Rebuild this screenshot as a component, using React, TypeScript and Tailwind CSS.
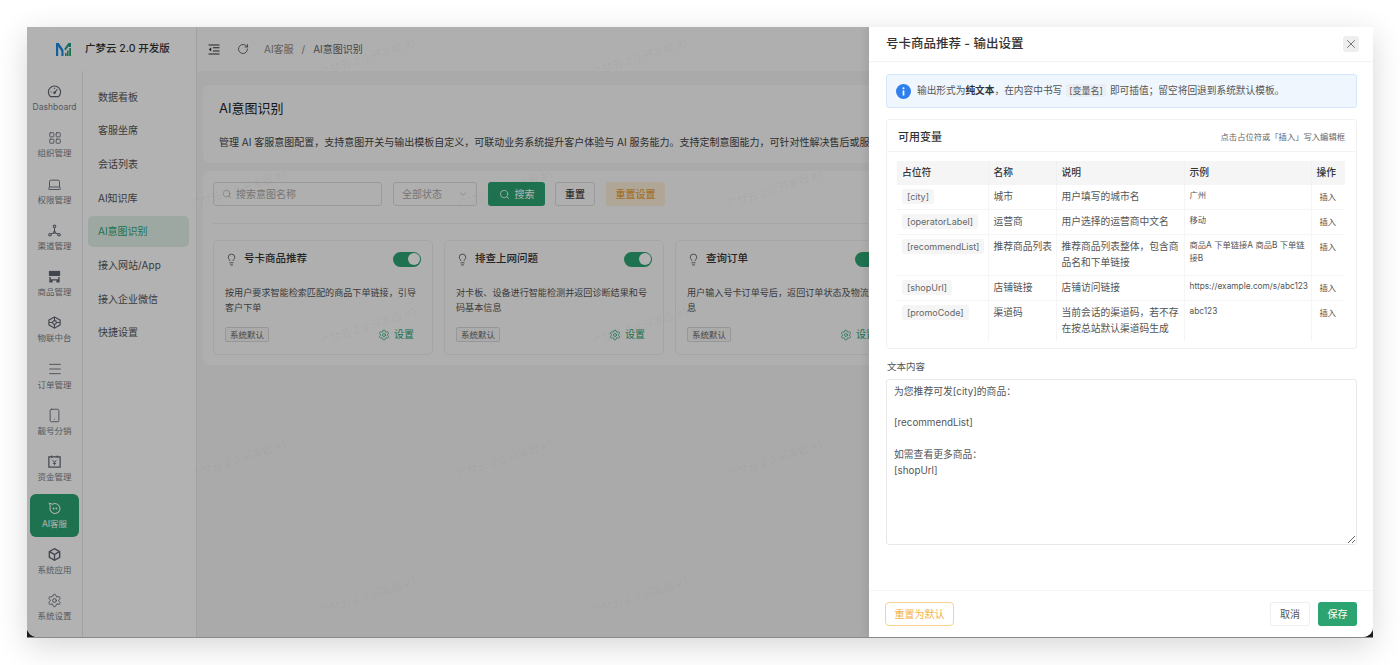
import { ChevronDown, Laptop, LayoutGrid, Lightbulb, Menu, RotateCw, Search, Settings, Smartphone, X } from 'lucide-react'
import type { ReactNode } from 'react'

const FONT = 'font-["Inter","Noto_Sans_CJK_SC",sans-serif]'

function Logo() {
  return (
    <svg width="15" height="15" viewBox="0 0 15 15">
      <path d="M0 1h2.800L7.500 8v6H5.400V9.200L2.200 4.600V14H0z" fill="#1e88e5" />
      <path d="M15 1h-2.600L8.300 6.800 9.400 8.500 12.800 4v1H15z" fill="#1f9d8a" />
      <rect x="9" y="11" width="1.600" height="3" fill="#2ba471" />
      <rect x="11" y="8.500" width="1.600" height="5.500" fill="#2ba471" />
      <rect x="13.200" y="6" width="1.800" height="8" fill="#2ba471" />
    </svg>
  )
}

function CollapseIcon() {
  return (
    <svg width="12" height="11" viewBox="0 0 12 11" fill="none" stroke="currentColor" strokeWidth="1.100">
      <path d="M.5 1h11M5 3.800h6.500M5 7h6.500M.5 10h11" />
      <path d="M3.200 3.200v4.400L.8 5.400z" fill="currentColor" stroke="none" />
    </svg>
  )
}

function GaugeIcon() {
  return (
    <svg width="15" height="15" viewBox="0 0 16 16" fill="none" stroke="currentColor" strokeWidth="1.200">
      <path d="M3.600 13.400h8.800a6.500 6.500 0 1 0-8.800 0z" />
      <path d="M8 9.200l3-3.400M3.800 8.500h1.200M8 4v1.200" />
      <circle cx="8" cy="9.300" r=".8" fill="currentColor" />
    </svg>
  )
}

function NodesIcon() {
  return (
    <svg width="15" height="15" viewBox="0 0 16 16" fill="none" stroke="currentColor" strokeWidth="1.100">
      <circle cx="8" cy="3.500" r="1.400" />
      <circle cx="3.200" cy="12.500" r="1.400" />
      <circle cx="12.800" cy="12.500" r="1.400" />
      <circle cx="8" cy="10" r="1" />
      <path d="M8 5v4M7.100 10.500l-2.700 1.300M8.900 10.500l2.700 1.300" />
    </svg>
  )
}

function ShopIcon() {
  return (
    <svg width="15" height="15" viewBox="0 0 16 16" fill="currentColor">
      <path d="M2 2h12v5.500H2z" />
      <path d="M2.500 8.500H4V11h8V8.500h1.500v6H10V12.300H6v2.200H2.500z" />
    </svg>
  )
}

function IotIcon() {
  return (
    <svg width="15" height="15" viewBox="0 0 16 16" fill="none" stroke="currentColor" strokeWidth="1.200">
      <path d="M8 2l6 3.500v5L8 14l-6-3.500v-5z" />
      <circle cx="8" cy="8" r="2" />
      <path d="M2 8h4M10 8h4M8 2v4M8 10v4" />
    </svg>
  )
}

function WalletIcon() {
  return (
    <svg width="15" height="15" viewBox="0 0 16 16" fill="none" stroke="currentColor" strokeWidth="1.300">
      <rect x="2" y="3" width="12" height="11" />
      <path d="M5 1.500v3M11 1.500v3M6 6.500l2 2.500 2-2.500M8 9v3M6.300 10h3.400" strokeWidth="1" />
    </svg>
  )
}

function BotIcon() {
  return (
    <svg width="15" height="15" viewBox="0 0 16 16" fill="none" stroke="currentColor" strokeWidth="1.100">
      <path d="M2.500 2.500L6 3.400A5.300 5.300 0 1 1 3.600 6z" />
      <circle cx="7" cy="8" r=".5" fill="currentColor" />
      <circle cx="10" cy="8" r=".5" fill="currentColor" />
    </svg>
  )
}

function CubeIcon() {
  return (
    <svg width="15" height="15" viewBox="0 0 16 16" fill="none" stroke="currentColor" strokeWidth="1.500">
      <path d="M8 1.800l5.500 3.100v6.200L8 14.200l-5.500-3.100V4.900z" />
      <path d="M2.800 5L8 8l5.200-3M8 8v6" />
    </svg>
  )
}

const RAIL: { label: string; icon: ReactNode; active?: boolean }[] = [
  { label: 'Dashboard', icon: <GaugeIcon /> },
  { label: '组织管理', icon: <LayoutGrid size={14} strokeWidth={1.4} /> },
  { label: '权限管理', icon: <Laptop size={15} strokeWidth={1.4} /> },
  { label: '渠道管理', icon: <NodesIcon /> },
  { label: '商品管理', icon: <ShopIcon /> },
  { label: '物联中台', icon: <IotIcon /> },
  { label: '订单管理', icon: <Menu size={16} strokeWidth={1.3} /> },
  { label: '靓号分销', icon: <Smartphone size={15} strokeWidth={1.4} /> },
  { label: '资金管理', icon: <WalletIcon /> },
  { label: 'AI客服', icon: <BotIcon />, active: true },
  { label: '系统应用', icon: <CubeIcon /> },
  { label: '系统设置', icon: <Settings size={15} strokeWidth={1.4} /> },
]

const MENU = ['数据看板', '客服坐席', '会话列表', 'AI知识库', 'AI意图识别', '接入网站/App', '接入企业微信', '快捷设置']

const INTENTS = [
  { title: '号卡商品推荐', desc: '按用户要求智能检索匹配的商品下单链接，引导客户下单' },
  { title: '排查上网问题', desc: '对卡板、设备进行智能检测并返回诊断结果和号码基本信息' },
  { title: '查询订单', desc: '用户输入号卡订单号后，返回订单状态及物流信息' },
]

const VARIABLES = [
  { code: '[city]', name: '城市', desc: '用户填写的城市名', demo: '广州' },
  { code: '[operatorLabel]', name: '运营商', desc: '用户选择的运营商中文名', demo: '移动' },
  { code: '[recommendList]', name: '推荐商品列表', desc: '推荐商品列表整体，包含商品名和下单链接', demo: '商品A 下单链接A 商品B 下单链接B' },
  { code: '[shopUrl]', name: '店铺链接', desc: '店铺访问链接', demo: 'https://example.com/s/abc123' },
  { code: '[promoCode]', name: '渠道码', desc: '当前会话的渠道码，若不存在按总站默认渠道码生成', demo: 'abc123' },
]

// centre of each watermark, in page pixels
const WATERMARKS = [
  [368, 58], [640, 58],
  [239, 190], [505, 190], [775, 190],
  [368, 327], [640, 327],
  [239, 460], [505, 460], [775, 460],
  [368, 597], [640, 597],
]

function Sidebar() {
  return (
    <aside className="w-[169px] shrink-0 flex flex-col bg-white">
      <div className="h-[44px] flex items-center pl-[29px] gap-[14px]">
        <Logo />
        <span className="text-[10.5px] font-medium text-[#333]">广梦云 2.0 开发版</span>
      </div>
      <div className="flex-1 flex min-h-0">
        <nav className="w-[56px] shrink-0 border-r border-[#e5e7eb] pl-[3px] pt-[6px] flex flex-col gap-[3.300px]">
          {RAIL.map(item => (
            <a
              key={item.label}
              className={
                item.active
                  ? 'w-[49px] h-[43px] rounded-[6px] bg-[#2ba471] text-white flex flex-col items-center justify-center gap-[2px]'
                  : 'w-[49px] h-[43px] rounded-[6px] text-[#5f6672] flex flex-col items-center justify-center gap-[2px]'
              }
            >
              {item.icon}
              <span className={item.active ? 'text-[8.5px] leading-[12px] text-white' : 'text-[8.5px] leading-[12px] text-[#7a7f88]'}>{item.label}</span>
            </a>
          ))}
        </nav>
        <nav className="flex-1 pl-[5px] pr-[7px] pt-[10.500px] flex flex-col gap-[2.700px]">
          {MENU.map(item => (
            <a
              key={item}
              className={
                item === 'AI意图识别'
                  ? 'h-[31px] flex items-center pl-[10px] rounded-[5px] bg-[#e3f1ea] text-[10px] text-[#2ba471]'
                  : 'h-[31px] flex items-center pl-[10px] text-[10px] text-[#555]'
              }
            >
              {item}
            </a>
          ))}
        </nav>
      </div>
    </aside>
  )
}

function MainPage() {
  return (
    <main className="flex-1 min-w-0 flex flex-col border-l border-[#e5e7eb] bg-[#f4f4f5] overflow-hidden">
      <header className="h-[44px] shrink-0 bg-[#fbfbfb] flex items-center pl-[11px] text-[#333]">
        <CollapseIcon />
        <RotateCw size={12} strokeWidth={1.4} className="ml-[17px]" />
        <div className="ml-[15px] flex items-center gap-[8px] text-[10px] text-[#888]">
          <span>AI客服</span>
          <span>/</span>
          <span className="text-[#666]">AI意图识别</span>
        </div>
      </header>
      <div className="pl-[6px] pt-[14px] flex flex-col gap-[8px] w-[1170px]">
        <section className="h-[78px] rounded-[8px] bg-[#fbfbfb] px-[16px] pt-[13px]">
          <h1 className="text-[13px] leading-[20px] text-[#222]">AI意图识别</h1>
          <p className="mt-[16px] text-[10px] leading-[16px] whitespace-nowrap text-[#444]">
            管理 AI 客服意图配置，支持意图开关与输出模板自定义，可联动业务系统提升客户体验与 AI 服务能力。支持定制意图能力，可针对性解决售后或服务流程问题。
          </p>
        </section>
        <section className="rounded-[8px] bg-[#fbfbfb] px-[10px] pt-[11px] pb-[10px]">
          <div className="flex items-center pb-[17px] border-b border-[#ececec]">
            <div className="w-[169px] h-[24px] rounded-[3px] border border-[#dcdcdc] flex items-center pl-[8px] gap-[4px] text-[10px] text-[#aaa]">
              <Search size={10} strokeWidth={1.5} />
              搜索意图名称
            </div>
            <div className="ml-[11px] w-[84px] h-[24px] rounded-[3px] border border-[#dcdcdc] flex items-center justify-between px-[8px] text-[10px] text-[#aaa]">
              全部状态
              <ChevronDown size={10} strokeWidth={1.5} />
            </div>
            <button className="ml-[11px] w-[57px] h-[24px] rounded-[3px] bg-[#2ba471] text-white text-[10px] flex items-center justify-center gap-[5px]">
              <Search size={11} strokeWidth={1.8} />
              搜索
            </button>
            <button className="ml-[10px] w-[40px] h-[24px] rounded-[3px] border border-[#dcdcdc] text-[10px] font-medium text-[#444]">重置</button>
            <button className="ml-[11px] w-[59px] h-[24px] rounded-[3px] bg-[#fbeed9] text-[10px] font-medium text-[#e8a33d]">重置设置</button>
          </div>
          <div className="mt-[16px] flex gap-[11px]">
            {INTENTS.map(intent => (
              <div key={intent.title} className="w-[220px] h-[115px] shrink-0 rounded-[5px] border border-[#ededed] px-[11px] pt-[10px]">
                <div className="flex items-center h-[16px]">
                  <Lightbulb size={13} strokeWidth={1.4} className="text-[#444]" />
                  <span className="ml-[6px] text-[10.5px] font-medium text-[#333]">{intent.title}</span>
                  <span className="ml-auto w-[28px] h-[15px] rounded-full bg-[#2ba471] flex items-center justify-end pr-[1.500px]">
                    <span className="w-[12px] h-[12px] rounded-full bg-white" />
                  </span>
                </div>
                <p className="mt-[19px] h-[36px] text-[9.100px] leading-[14.500px] text-[#555]">{intent.desc}</p>
                <div className="mt-[5px] flex items-center justify-between pr-[7px]">
                  <span className="h-[15px] px-[4px] rounded-[2px] border border-[#d8d8d8] bg-[#f5f5f5] text-[8.500px] leading-[14px] text-[#666]">系统默认</span>
                  <span className="flex items-center gap-[4px] text-[10px] text-[#2ba471]">
                    <Settings size={12} strokeWidth={1.5} />
                    设置
                  </span>
                </div>
              </div>
            ))}
            <div className="w-[220px] h-[115px] shrink-0 rounded-[5px] border border-[#ededed]" />
          </div>
        </section>
      </div>
    </main>
  )
}

function Watermarks() {
  return (
    <div className="absolute inset-0 pointer-events-none overflow-hidden">
      {WATERMARKS.map(([x, y]) => (
        <span
          key={`${x}-${y}`}
          className="absolute -translate-x-1/2 -translate-y-1/2 -rotate-[18deg] whitespace-nowrap text-[10.5px] text-black/5"
          style={{ left: x - 27, top: y - 27 }}
        >
          广梦云 2.0 开发版 #1
        </span>
      ))}
    </div>
  )
}

function VariableTable() {
  return (
    <table className="w-[448px] table-fixed border-collapse text-left text-[9.750px] text-[#555]">
      <colgroup>
        <col className="w-[91px]" />
        <col className="w-[68px]" />
        <col className="w-[128px]" />
        <col className="w-[127px]" />
        <col className="w-[34px]" />
      </colgroup>
      <thead>
        <tr className="h-[24px] bg-[#f5f5f5] font-medium text-[#333]">
          <th className="pl-[5px] font-medium">占位符</th>
          <th className="pl-[5px] font-medium border-l border-[#f0f0f0]">名称</th>
          <th className="pl-[5px] font-medium border-l border-[#f0f0f0]">说明</th>
          <th className="pl-[5px] font-medium border-l border-[#f0f0f0]">示例</th>
          <th className="pl-[5px] font-medium border-l border-[#f0f0f0]">操作</th>
        </tr>
      </thead>
      <tbody>
        {VARIABLES.map(row => (
          <tr key={row.code} className="border-b border-[#f5f5f5] last:border-b-0 align-top">
            <td className="pl-[5px] pt-[4px] pb-[3px]">
              <code className="inline-block h-[15px] px-[5px] rounded-[3px] bg-[#f5f5f5] font-['Inter','Noto_Sans_CJK_SC',sans-serif] text-[9px] leading-[15px] text-[#666]">{row.code}</code>
            </td>
            <td className="pl-[5px] pt-[4px] leading-[16px] border-l border-[#f5f5f5]">{row.name}</td>
            <td className="pl-[5px] pr-[4px] pt-[4px] pb-[4px] leading-[16px] border-l border-[#f5f5f5]">{row.desc}</td>
            <td className="pl-[5px] pr-[3px] pt-[4px] pb-[4px] text-[8.300px] leading-[13px] border-l border-[#f5f5f5]">{row.demo}</td>
            <td className="pl-[8px] pt-[5px] text-[8.300px] leading-[15px] border-l border-[#f5f5f5]">插入</td>
          </tr>
        ))}
      </tbody>
    </table>
  )
}

function SettingsDrawer() {
  return (
    <aside className="absolute top-0 right-0 bottom-0 w-[504px] bg-white flex flex-col text-[#555] shadow-[-3px_0_8px_rgba(0,0,0,0.08)]">
      <header className="h-[35px] shrink-0 border-b border-[#f3f3f3] flex items-center justify-between pl-[17px] pr-[14px]">
        <h2 className="text-[12.500px] font-medium text-[#333]">号卡商品推荐 - 输出设置</h2>
        <button className="w-[16px] h-[16px] rounded-[3px] bg-[#eeeeee] flex items-center justify-center text-[#444]">
          <X size={14} strokeWidth={1.2} />
        </button>
      </header>
      <div className="flex-1 min-h-0 pl-[17px] pr-[16px] pt-[12px]">
        <div className="h-[34px] rounded-[3px] border border-[#d3e6fb] bg-[#eff6fe] flex items-center pl-[9px] gap-[6px] text-[9.700px] text-[#555]">
          <svg width="15" height="15" viewBox="0 0 16 16">
            <circle cx="8" cy="8" r="8" fill="#2f80ed" />
            <rect x="7.100" y="6.800" width="1.800" height="5.500" fill="#fff" />
            <circle cx="8" cy="4.500" r="1.100" fill="#fff" />
          </svg>
          <span>
            输出形式为<b className="font-semibold text-[#333]">纯文本</b>，在内容中书写
            <code className="mx-[4px] px-[3px] py-[1px] rounded-[2px] bg-[#e9eef4] font-['Inter','Noto_Sans_CJK_SC',sans-serif] text-[9px]">[变量名]</code>
            即可插值；留空将回退到系统默认模板。
          </span>
        </div>
        <section className="mt-[11px] h-[230px] rounded-[3px] border border-[#f0f0f0]">
          <div className="h-[32px] pt-[3px] border-b border-[#f3f3f3] flex items-center justify-between px-[11px]">
            <h3 className="text-[11px] font-medium text-[#333]">可用变量</h3>
            <span className="text-[8.300px] text-[#666]">点击占位符或「插入」写入编辑框</span>
          </div>
          <div className="pl-[10px] pt-[9px]">
            <VariableTable />
          </div>
        </section>
        <label className="block mt-[11px] pl-[1px] text-[9.500px] leading-[14px] text-[#555]">文本内容</label>
        <textarea
          className="mt-[5px] block w-full h-[166px] rounded-[3px] border border-[#e8e8e8] px-[7px] py-[4px] text-[9.800px] leading-[15.700px] text-[#555] outline-none"
          readOnly
          value={'为您推荐可发[city]的商品：\n\n[recommendList]\n\n如需查看更多商品：\n[shopUrl]'}
        />
      </div>
      <footer className="h-[47px] shrink-0 border-t border-[#f5f5f5] flex items-center pl-[16px] pr-[16px]">
        <button className="w-[69px] h-[24px] rounded-[4px] border-[1.500px] border-[#fbd28f] text-[10px] text-[#f5b14a]">重置为默认</button>
        <button className="ml-auto w-[40px] h-[24px] rounded-[3px] border border-[#eeeeee] text-[10px] text-[#555]">取消</button>
        <button className="ml-[8px] w-[39px] h-[24px] rounded-[3px] bg-[#2ba471] text-[10px] text-white">保存</button>
      </footer>
    </aside>
  )
}

export default function App() {
  return (
    <div className={`w-[1400px] h-[665px] overflow-hidden bg-white pt-[27px] px-[27px] ${FONT}`}>
      <div className="h-[611px] bg-[#1c1c1c] shadow-[0_8px_30px_rgba(0,0,0,0.16)] border-b border-[#8a8a8a]">
        <div className="relative h-full rounded-b-[10px] overflow-hidden flex bg-white">
          <Sidebar />
          <MainPage />
          <Watermarks />
          <div className="absolute inset-0 bg-black/30" />
          <SettingsDrawer />
        </div>
      </div>
    </div>
  )
}
